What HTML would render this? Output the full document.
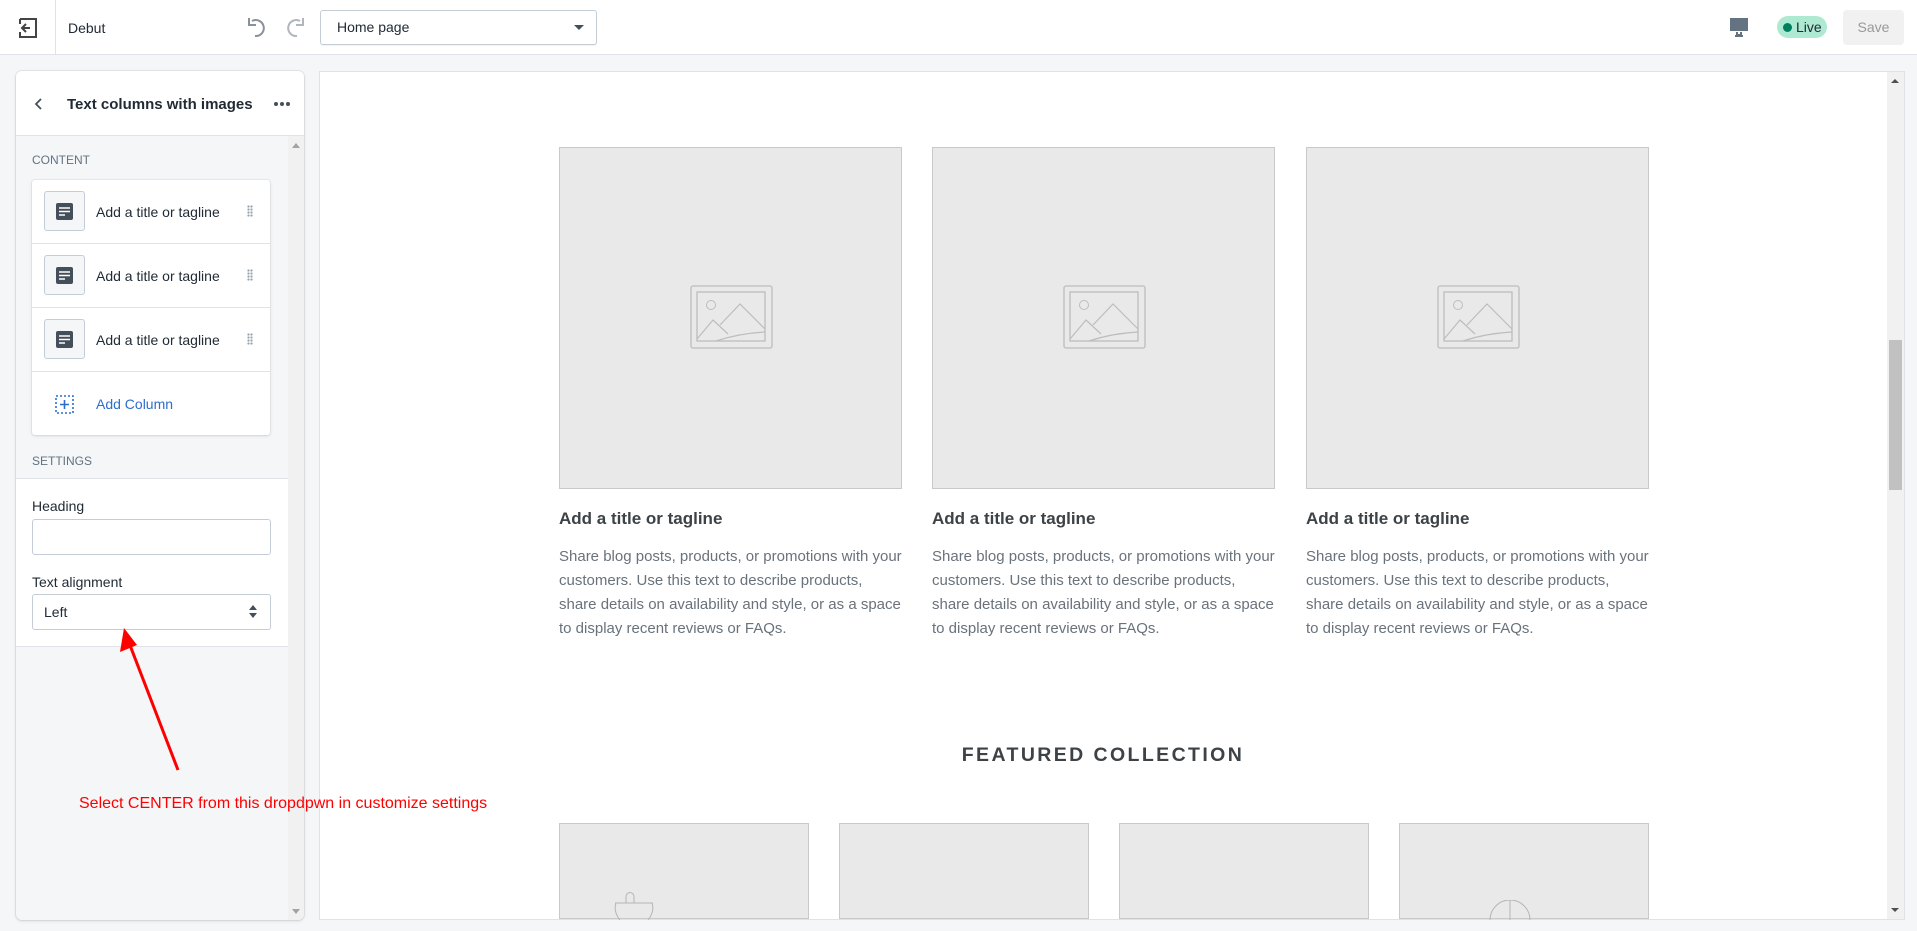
<!DOCTYPE html>
<html><head><meta charset="utf-8"><style>
*{box-sizing:border-box;margin:0;padding:0}
body{width:1917px;height:931px;background:#f4f6f8;font-family:"Liberation Sans",sans-serif;position:relative;overflow:hidden;color:#212b36}
.abs{position:absolute}
.top{left:0;top:0;width:1917px;height:55px;background:#fff;border-bottom:1px solid #dfe3e8}
.panel{left:16px;top:71px;width:288px;height:849px;background:#f4f6f8;border-radius:6px;box-shadow:0 0 0 1px rgba(63,63,68,.08),0 1px 3px rgba(63,63,68,.15);overflow:hidden}
.ph{left:0;top:0;width:288px;height:65px;background:#fff;border-bottom:1px solid #dfe3e8}
.lbl{font-size:12px;color:#637381}
.card{left:16px;top:109px;width:238px;height:255px;background:#fff;border-radius:3px;box-shadow:0 0 0 1px rgba(63,63,68,.05),0 1px 3px rgba(63,63,68,.15)}
.row{position:absolute;left:0;width:238px;height:64px;border-bottom:1px solid #dfe3e8}
.ic{position:absolute;left:12px;top:11px;width:41px;height:40px;border:1px solid #c4cdd5;border-radius:3px;background:#f4f6f8}
.rt{position:absolute;left:64px;top:24px;font-size:14px}
.dr{position:absolute;left:215px;top:25px;width:6px;height:12px;background-image:radial-gradient(circle,#919eab 1px,transparent 1.2px);background-size:3px 3px}
.prev{left:319px;top:71px;width:1586px;height:849px;background:#fff;border:1px solid #dfe3e8}
.img{background:#e9e9e9;border:1px solid #c9c9c9}
.t{font-size:17px;font-weight:bold;color:#3d4246}
.b{font-size:15px;line-height:24px;color:#69727b;width:343px}
.inp{border:1px solid #c4cdd5;border-radius:3px;background:#fff}
</style></head><body>
<div class="abs top">
  <svg class="abs" style="left:17px;top:17px" width="22" height="22" viewBox="0 0 22 22"><path d="M3 2h16v18H3v-5M3 7V2" fill="none" stroke="#444" stroke-width="2"/><path d="M13 11H5M9 7l-4 4 4 4" fill="none" stroke="#444" stroke-width="2"/></svg>
  <div class="abs" style="left:55px;top:0;width:1px;height:55px;background:#dfe3e8"></div>
  <div class="abs" style="left:68px;top:20px;font-size:14px">Debut</div>
  <svg class="abs" style="left:246px;top:16px" width="24" height="22" viewBox="0 0 24 22"><path d="M6 5a8 8 0 1 1 3 15" fill="none" stroke="#8a9199" stroke-width="2"/><path d="M3 2v7h7" fill="none" stroke="#8a9199" stroke-width="2"/></svg>
  <svg class="abs" style="left:282px;top:16px" width="24" height="22" viewBox="0 0 24 22"><path d="M18 5a8 8 0 1 0-3 15" fill="none" stroke="#b0b6bc" stroke-width="2"/><path d="M21 2v7h-7" fill="none" stroke="#b0b6bc" stroke-width="2"/></svg>
  <div class="abs inp" style="left:320px;top:10px;width:277px;height:35px;box-shadow:0 1px 0 rgba(22,29,37,.05)"></div>
  <div class="abs" style="left:337px;top:19px;font-size:14px">Home page</div>
  <div class="abs" style="left:574px;top:25px;width:0;height:0;border-left:5px solid transparent;border-right:5px solid transparent;border-top:5px solid #454f5b"></div>
  <svg class="abs" style="left:1729px;top:17px" width="20" height="20" viewBox="0 0 20 20"><rect x="1" y="1" width="18" height="13" fill="#637381"/><rect x="3" y="14" width="14" height="1.5" fill="#fff"/><path d="M8 15v3h4v-3M6 19h8" stroke="#637381" stroke-width="2" fill="none"/></svg>
  <div class="abs" style="left:1777px;top:16px;width:50px;height:22px;border-radius:11px;background:#aee9d1"></div>
  <div class="abs" style="left:1783px;top:23px;width:9px;height:9px;border-radius:50%;background:#007f5f"></div>
  <div class="abs" style="left:1796px;top:19px;font-size:14px;color:#212b36">Live</div>
  <div class="abs" style="left:1843px;top:10px;width:61px;height:35px;border-radius:4px;background:#f1f1f1;color:#999;font-size:14px;text-align:center;line-height:35px">Save</div>
</div>

<div class="abs panel">
  <div class="abs ph">
    <svg class="abs" style="left:18px;top:26px" width="10" height="14" viewBox="0 0 10 14"><path d="M7 2 2 7l5 5" fill="none" stroke="#454f5b" stroke-width="1.8"/></svg>
    <div class="abs" style="left:51px;top:25px;font-size:15px;font-weight:bold">Text columns with images</div>
    <div class="abs" style="left:258px;top:31px;width:4px;height:4px;border-radius:50%;background:#454f5b;box-shadow:6px 0 #454f5b,12px 0 #454f5b"></div>
  </div>
  <div class="abs" style="left:272px;top:65px;width:16px;height:784px;background:#f1f1f1"></div>
  <div class="abs" style="left:276px;top:72px;border-left:4px solid transparent;border-right:4px solid transparent;border-bottom:5px solid #a3a3a3"></div>
  <div class="abs" style="left:276px;top:838px;border-left:4px solid transparent;border-right:4px solid transparent;border-top:5px solid #a3a3a3"></div>
  <div class="abs lbl" style="left:16px;top:82px">CONTENT</div>
  <div class="abs card">
    <div class="row" style="top:0"><div class="ic"><svg style="position:absolute;left:11px;top:11px" width="17" height="17"><rect width="17" height="17" rx="2" fill="#454f5b"/><path d="M3 5h11M3 8.5h11M3 12h6" stroke="#fff" stroke-width="1.6"/></svg></div><div class="rt">Add a title or tagline</div><div class="dr"></div></div>
    <div class="row" style="top:64px"><div class="ic"><svg style="position:absolute;left:11px;top:11px" width="17" height="17"><rect width="17" height="17" rx="2" fill="#454f5b"/><path d="M3 5h11M3 8.5h11M3 12h6" stroke="#fff" stroke-width="1.6"/></svg></div><div class="rt">Add a title or tagline</div><div class="dr"></div></div>
    <div class="row" style="top:128px"><div class="ic"><svg style="position:absolute;left:11px;top:11px" width="17" height="17"><rect width="17" height="17" rx="2" fill="#454f5b"/><path d="M3 5h11M3 8.5h11M3 12h6" stroke="#fff" stroke-width="1.6"/></svg></div><div class="rt">Add a title or tagline</div><div class="dr"></div></div>
    <div class="row" style="top:192px;border:none">
      <svg style="position:absolute;left:23px;top:23px" width="19" height="19"><rect x="1" y="1" width="17" height="17" fill="none" stroke="#2c6ecb" stroke-width="1.6" stroke-dasharray="2 2"/><path d="M9.5 5v9M5 9.5h9" stroke="#2c6ecb" stroke-width="1.6"/></svg>
      <div class="rt" style="color:#2c6ecb">Add Column</div>
    </div>
  </div>
  <div class="abs lbl" style="left:16px;top:383px">SETTINGS</div>
  <div class="abs" style="left:0;top:407px;width:272px;height:169px;background:#fff;border-top:1px solid #dfe3e8;border-bottom:1px solid #dfe3e8">
    <div class="abs" style="left:16px;top:19px;font-size:14px">Heading</div>
    <div class="abs inp" style="left:16px;top:40px;width:239px;height:36px"></div>
    <div class="abs" style="left:16px;top:95px;font-size:14px">Text alignment</div>
    <div class="abs inp" style="left:16px;top:115px;width:239px;height:36px"></div>
    <div class="abs" style="left:28px;top:125px;font-size:14px">Left</div>
    <div class="abs" style="left:233px;top:126px;border-left:4px solid transparent;border-right:4px solid transparent;border-bottom:5px solid #454f5b"></div>
    <div class="abs" style="left:233px;top:134px;border-left:4px solid transparent;border-right:4px solid transparent;border-top:5px solid #454f5b"></div>
  </div>
</div>

<div class="abs prev">
  <div class="abs" style="left:1567px;top:0;width:17px;height:847px;background:#f1f1f1"></div>
  <div class="abs" style="left:1571px;top:7px;border-left:4px solid transparent;border-right:4px solid transparent;border-bottom:4px solid #505050"></div>
  <div class="abs" style="left:1571px;top:836px;border-left:4px solid transparent;border-right:4px solid transparent;border-top:4px solid #505050"></div>
  <div class="abs" style="left:1569px;top:268px;width:13px;height:150px;background:#c1c1c1"></div>
</div>

<div class="abs img" style="left:559px;top:147px;width:343px;height:342px"></div>
<div class="abs img" style="left:932px;top:147px;width:343px;height:342px"></div>
<div class="abs img" style="left:1306px;top:147px;width:343px;height:342px"></div>
<svg class="abs" style="left:690px;top:285px" width="83" height="65" viewBox="0 0 83 65"><rect x="1" y="1" width="81" height="62" rx="2" fill="none" stroke="#bdbdbd" stroke-width="1.3"/><rect x="7" y="7" width="68" height="49" fill="none" stroke="#bdbdbd" stroke-width="1.3"/><circle cx="21" cy="20" r="4.5" fill="none" stroke="#bdbdbd"/><path d="M7 54l16-19 15 14M30 40l20-21 25 25M26 56c15-5 30-8 49-9" fill="none" stroke="#bdbdbd" stroke-width="1.2"/></svg>
<svg class="abs" style="left:1063px;top:285px" width="83" height="65" viewBox="0 0 83 65"><rect x="1" y="1" width="81" height="62" rx="2" fill="none" stroke="#bdbdbd" stroke-width="1.3"/><rect x="7" y="7" width="68" height="49" fill="none" stroke="#bdbdbd" stroke-width="1.3"/><circle cx="21" cy="20" r="4.5" fill="none" stroke="#bdbdbd"/><path d="M7 54l16-19 15 14M30 40l20-21 25 25M26 56c15-5 30-8 49-9" fill="none" stroke="#bdbdbd" stroke-width="1.2"/></svg>
<svg class="abs" style="left:1437px;top:285px" width="83" height="65" viewBox="0 0 83 65"><rect x="1" y="1" width="81" height="62" rx="2" fill="none" stroke="#bdbdbd" stroke-width="1.3"/><rect x="7" y="7" width="68" height="49" fill="none" stroke="#bdbdbd" stroke-width="1.3"/><circle cx="21" cy="20" r="4.5" fill="none" stroke="#bdbdbd"/><path d="M7 54l16-19 15 14M30 40l20-21 25 25M26 56c15-5 30-8 49-9" fill="none" stroke="#bdbdbd" stroke-width="1.2"/></svg>

<div class="abs t" style="left:559px;top:509px">Add a title or tagline</div>
<div class="abs t" style="left:932px;top:509px">Add a title or tagline</div>
<div class="abs t" style="left:1306px;top:509px">Add a title or tagline</div>
<div class="abs b" style="left:559px;top:545px">Share blog posts, products, or promotions with your customers. Use this text to describe products, share details on availability and style, or as a space to display recent reviews or FAQs.</div>
<div class="abs b" style="left:932px;top:545px">Share blog posts, products, or promotions with your customers. Use this text to describe products, share details on availability and style, or as a space to display recent reviews or FAQs.</div>
<div class="abs b" style="left:1306px;top:545px">Share blog posts, products, or promotions with your customers. Use this text to describe products, share details on availability and style, or as a space to display recent reviews or FAQs.</div>

<div class="abs" style="left:800px;top:744px;width:606px;text-align:center;font-size:19.5px;font-weight:bold;letter-spacing:2.4px;color:#3d4246">FEATURED COLLECTION</div>

<div class="abs img" style="left:559px;top:823px;width:250px;height:96px"></div>
<div class="abs img" style="left:839px;top:823px;width:250px;height:96px"></div>
<div class="abs img" style="left:1119px;top:823px;width:250px;height:96px"></div>
<div class="abs img" style="left:1399px;top:823px;width:250px;height:96px"></div>
<svg class="abs" style="left:580px;top:880px" width="100" height="40"><path d="M46 23v-6c0-6 8-6 8 0v6M35 23h38M36 23c-2 6 0 12 4 17M72 23c2 6 0 12-4 17" fill="none" stroke="#b5b5b5"/></svg>
<svg class="abs" style="left:1480px;top:900px" width="60" height="20"><path d="M10 20a20 20 0 0 1 40 0M30 0v20" fill="none" stroke="#b5b5b5"/></svg>

<svg class="abs" style="left:0;top:0" width="400" height="931"><path d="M178 770 L128 640" stroke="#f00" stroke-width="3"/><path d="M124 628 L120 652 L137 645 Z" fill="#f00"/></svg>
<div class="abs" style="left:79px;top:795px;font-size:16px;color:#f00">Select CENTER from this dropdpwn in customize settings</div>
</body></html>
